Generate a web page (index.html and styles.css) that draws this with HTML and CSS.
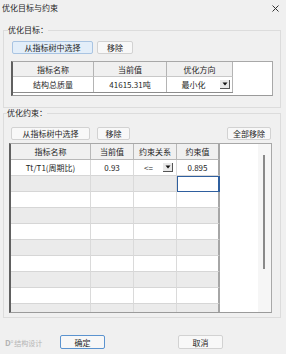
FILE: index.html
```html
<!DOCTYPE html>
<html>
<head>
<meta charset="utf-8">
<link rel="stylesheet" href="styles.css">
</head>
<body>
<div class="dialog">
  <div class="titlebar">
    <span class="title">优化目标与约束</span>
    <svg class="close" viewBox="0 0 7 7"><path d="M0.5 0.5L6.5 6.5M6.5 0.5L0.5 6.5" stroke="#333" stroke-width="1"/></svg>
  </div>

  <fieldset class="group g1">
    <legend>优化目标：</legend>
    <div class="btnrow r1">
      <button class="btn primary w81">从指标树中选择</button>
      <button class="btn w36">移除</button>
    </div>
    <div class="tbl1">
      <div class="grid1">
        <div class="row head">
          <div class="c a1">指标名称</div>
          <div class="c a2">当前值</div>
          <div class="c a3">优化方向</div>
        </div>
        <div class="row data">
          <div class="c a1">结构总质量</div>
          <div class="c a2">41615.31吨</div>
          <div class="c a3 combo"><span class="ctext">最小化</span><span class="dd"><svg viewBox="0 0 10 9"><rect x="0" y="0" width="10" height="9" fill="#e9e9e9"/><path d="M2.5 2.5H7.5L5 5.5Z" fill="#111"/><path d="M0 8.5H10M9.5 0V9" stroke="#555" stroke-width="1"/></svg></span></div>
        </div>
      </div>
    </div>
  </fieldset>

  <fieldset class="group g2">
    <legend>优化约束：</legend>
    <div class="btnrow r2">
      <button class="btn w79">从指标树中选择</button>
      <button class="btn w33">移除</button>
      <button class="btn w44 push">全部移除</button>
    </div>
    <div class="tbl2">
      <div class="grid2">
        <div class="row2 head">
          <div class="d b1">指标名称</div>
          <div class="d b2">当前值</div>
          <div class="d b3">约束关系</div>
          <div class="d b4">约束值</div>
        </div>
        <div class="row2">
          <div class="d b1">Tt/T1(周期比)</div>
          <div class="d b2">0.93</div>
          <div class="d b3 combo"><span class="ctext">&lt;=</span><span class="dd"><svg viewBox="0 0 10 9"><rect x="0" y="0" width="10" height="9" fill="#e9e9e9"/><path d="M2.5 2.5H7.5L5 5.5Z" fill="#111"/><path d="M0 8.5H10M9.5 0V9" stroke="#555" stroke-width="1"/></svg></span></div>
          <div class="d b4">0.895</div>
        </div>
        <div class="row2 alt">
          <div class="d b1"></div><div class="d b2"></div><div class="d b3"></div><div class="d b4 sel"></div>
        </div>
        <div class="row2"><div class="d b1"></div><div class="d b2"></div><div class="d b3"></div><div class="d b4"></div></div>
        <div class="row2 alt"><div class="d b1"></div><div class="d b2"></div><div class="d b3"></div><div class="d b4"></div></div>
        <div class="row2"><div class="d b1"></div><div class="d b2"></div><div class="d b3"></div><div class="d b4"></div></div>
        <div class="row2 alt"><div class="d b1"></div><div class="d b2"></div><div class="d b3"></div><div class="d b4"></div></div>
        <div class="row2"><div class="d b1"></div><div class="d b2"></div><div class="d b3"></div><div class="d b4"></div></div>
        <div class="row2 alt"><div class="d b1"></div><div class="d b2"></div><div class="d b3"></div><div class="d b4"></div></div>
        <div class="row2"><div class="d b1"></div><div class="d b2"></div><div class="d b3"></div><div class="d b4"></div></div>
        <div class="row2 alt"><div class="d b1"></div><div class="d b2"></div><div class="d b3"></div><div class="d b4"></div></div>
      </div>
      <div class="blank">
        <div class="track"><div class="thumb"></div></div>
      </div>
    </div>
  </fieldset>

  <div class="footer">
    <span class="watermark"><b>D</b><sup>o</sup>结构设计</span>
    <button class="btn default w45">确定</button>
    <button class="btn w45">取消</button>
  </div>
</div>
</body>
</html>
```

FILE: styles.css
```css
* { box-sizing: border-box; }

body {
  margin: 0;
  width: 286px;
  height: 354px;
  overflow: hidden;
  background: #f0f0f0;
  font-family: "Noto Sans CJK SC", "Microsoft YaHei", sans-serif;
  font-size: 8px;
  color: #1e1e1e;
}

.dialog {
  position: relative;
  width: 286px;
  height: 354px;
}

.titlebar {
  height: 25px;
  display: flex;
  justify-content: space-between;
  align-items: flex-start;
  padding: 3px 7px 0 2px;
  line-height: 10px;
}

.close {
  width: 7px;
  height: 7px;
  margin-top: 2px;
}

fieldset.group {
  margin: 0 5px 0 3px;
  border: 1px solid #dcdcdc;
  min-width: 0;
}

legend {
  padding: 0;
  line-height: 10px;
  font-size: 8px;
}

.g1 {
  padding: 6px 7px 11px 7px;
}
.g1 legend { margin-left: -3px; }

.g2 {
  padding: 9px 8px 4px 5px;
}
.g2 legend { margin-left: -2px; }

.btnrow {
  display: flex;
  height: 13px;
}
.r1 { gap: 4px; margin-left: 1px; }
.r2 { margin-left: 2px; margin-right: 1px; }
.r2 .w33 { margin-left: 7px; }
.push { margin-left: auto; }

.btn {
  height: 13px;
  padding: 0;
  font: inherit;
  font-size: 8px;
  line-height: 11px;
  color: #1e1e1e;
  border: 1px solid #d2d2d2;
  background: #f8f8f8;
  border-radius: 2px;
  display: flex;
  align-items: center;
  justify-content: center;
}
.btn.primary {
  background: #e3eef9;
  border-color: #a9c4e2;
}
.btn.default {
  border-color: #5b93cf;
  background: #f7f7f7;
}
.w81 { width: 81px; }
.w79 { width: 79px; }
.w36 { width: 36px; }
.w33 { width: 33px; }
.w44 { width: 44px; }
.w45 { width: 45px; height: 14px; }

/* top table */
.tbl1 {
  margin-top: 7px;
  height: 35px;
  background: #fff;
  border-top: 1px solid #a8a8a8;
  border-right: 1px solid #a8a8a8;
  border-bottom: 1px solid #9a9a9a;
  border-left: 2px solid #606060;
}
.grid1 {
  width: 220px;
}
.row {
  display: flex;
}
.row.head {
  height: 15px;
  background: #f0f0f0;
}
.row.data {
  height: 16px;
  background: #fff;
  border-bottom: 1px solid #8c8c8c;
}
.c {
  display: flex;
  align-items: center;
  justify-content: center;
  border-right: 1px solid #b4b4b4;
  white-space: nowrap;
}
.head .c {
  border-bottom: 1px solid #c8c8c8;
}
.a1 { width: 81px; }
.a2 { width: 73px; }
.a3 { width: 66px; }

.combo {
  justify-content: flex-start;
}
.ctext {
  flex: 1;
  text-align: center;
}
.dd {
  width: 10px;
  height: 9px;
  margin-right: 2px;
  display: flex;
}
.dd svg {
  width: 10px;
  height: 9px;
}
.b3.combo .dd { margin-right: 3px; }

/* constraint table */
.tbl2 {
  margin-top: 3px;
  height: 170px;
  display: flex;
  background: #fff;
  border-top: 1px solid #a8a8a8;
  border-right: 1px solid #a8a8a8;
  border-bottom: 1px solid #9a9a9a;
  border-left: 2px solid #606060;
  overflow: hidden;
}
.grid2 {
  width: 209px;
  flex: none;
  overflow: hidden;
}
.row2 {
  display: flex;
  height: 16px;
  background: #fff;
}
.row2.head {
  background: #f0f0f0;
}
.row2.alt {
  background: #ebebeb;
}
.d {
  display: flex;
  align-items: center;
  justify-content: center;
  border-right: 1px solid #dadada;
  border-bottom: 1px solid #d6d6d6;
  white-space: nowrap;
}
.head .d {
  border-right-color: #b8b8b8;
  border-bottom-color: #b8b8b8;
}
.b1 { width: 80px; }
.b2 { width: 43px; }
.b3 { width: 43px; }
.b4 {
  width: 43px;
  border-right: 2px solid #a6a6a6;
}
.head .b4 { border-right: 2px solid #a6a6a6; }
.d.sel {
  background: #fff;
  border: 1px solid #2f5f9e;
  border-right: 2px solid #2f5f9e;
}

.blank {
  flex: 1;
  display: flex;
  justify-content: flex-end;
}
.track {
  width: 13px;
  background: #f6f6f6;
  padding-left: 5px;
  padding-top: 11px;
}
.thumb {
  width: 2px;
  height: 114px;
  background: #8a8a8a;
}

/* footer */
.footer {
  position: relative;
  display: flex;
  padding-left: 60px;
  gap: 73px;
  margin-top: 17px;
}
.watermark {
  position: absolute;
  left: 5px;
  top: 1px;
  font-size: 7px;
  line-height: 10px;
  color: #b4b4b4;
  white-space: nowrap;
}
.watermark b { font-size: 8px; }
.watermark sup { font-size: 4px; margin-right: 1px; }
```
